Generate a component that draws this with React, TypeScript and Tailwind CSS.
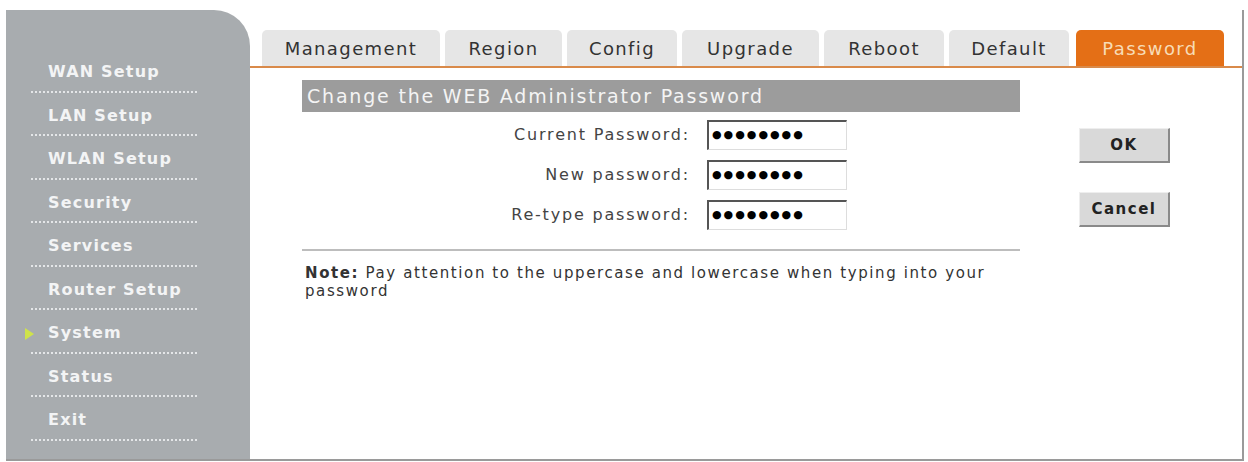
const menu = [
  "WAN Setup",
  "LAN Setup",
  "WLAN Setup",
  "Security",
  "Services",
  "Router Setup",
  "System",
  "Status",
  "Exit",
];

const tabs = [
  { label: "Management", w: "w-[178px]" },
  { label: "Region", w: "w-[117px]" },
  { label: "Config", w: "w-[110px]" },
  { label: "Upgrade", w: "w-[137px]" },
  { label: "Reboot", w: "w-[120px]" },
  { label: "Default", w: "w-[120px]" },
  { label: "Password", w: "w-[148px]", active: true },
];

const fields = ["Current Password:", "New password:", "Re-type password:"];

function Sidebar() {
  return (
    <div className="w-[244px] shrink-0 bg-[#a8acaf] rounded-tr-[36px] pt-[39px] pl-[25px] pr-[53px]">
      {menu.map((item) => (
        <div
          key={item}
          className="h-[43.5px] border-b-2 border-dotted border-[#e4e6e8] flex items-center relative"
        >
          {item === "System" && (
            <span className="absolute left-[-6px] top-[18px] w-0 h-0 border-y-[6px] border-y-transparent border-l-[9px] border-l-[#cfe34a]" />
          )}
          <span className="pl-[17px] pt-[5px] text-[16px] font-bold text-[#f3f4f5] tracking-[1.2px]">
            {item}
          </span>
        </div>
      ))}
    </div>
  );
}

function TabBar() {
  return (
    <div className="flex items-end gap-[5px] pl-[12px] mt-[20px] border-b-2 border-[#d98a4a]">
      {tabs.map((t) => (
        <div
          key={t.label}
          className={`${t.w} h-[36px] rounded-t-[5px] flex items-center justify-center text-[18px] tracking-[1.4px] ${
            t.active
              ? "bg-[#e46f16] text-[#f7dcb6] ml-[2px]"
              : "bg-[#e6e6e6] text-[#333]"
          }`}
        >
          {t.label}
        </div>
      ))}
    </div>
  );
}

function PasswordForm() {
  return (
    <div className="flex pl-[52px] pt-[12px]">
      <div className="w-[718px]">
        <div className="h-[32px] bg-[#9c9c9c] text-[#f4f4f4] text-[19px] tracking-[1.8px] pl-[5px] flex items-center whitespace-nowrap">
          Change the WEB Administrator Password
        </div>
        <div className="flex flex-col gap-[10px] pt-[8px]">
          {fields.map((f) => (
            <div key={f} className="flex items-center h-[30px]">
              <div className="w-[388px] text-right text-[16px] tracking-[1.8px] text-[#444]">
                {f}
              </div>
              <div className="ml-[17px] w-[140px] h-[30px] bg-white border-t-2 border-l-2 border-[#555] border-r border-b border-r-[#ddd] border-b-[#ddd] flex items-center pl-[3px] text-[11px] tracking-[2px] text-black">
                ●●●●●●●●
              </div>
            </div>
          ))}
        </div>
        <div className="mt-[19px] h-[2px] bg-[#bdbdbd]" />
        <p className="mt-[13px] pl-[3px] text-[15px] tracking-[1.6px] leading-[18px] text-[#333] whitespace-nowrap">
          <span className="font-bold">Note:</span> Pay attention to the
          uppercase and lowercase when typing into your
          <br />
          password
        </p>
      </div>
      <div className="ml-[59px] pt-[48px] flex flex-col gap-[29px]">
        <button className="w-[91px] h-[35px] bg-[#d9d9d9] border-t border-l border-[#eee] border-r-2 border-b-2 border-r-[#8a8a8a] border-b-[#8a8a8a] text-[15px] tracking-[1.5px] font-bold text-[#222]">
          OK
        </button>
        <button className="w-[91px] h-[35px] bg-[#d9d9d9] border-t border-l border-[#eee] border-r-2 border-b-2 border-r-[#8a8a8a] border-b-[#8a8a8a] text-[15px] tracking-[1.5px] font-bold text-[#222]">
          Cancel
        </button>
      </div>
    </div>
  );
}

export default function App() {
  return (
    <div
      className="w-[1248px] h-[462px] bg-white pt-[10px] pl-[6px] overflow-hidden"
      style={{ fontFamily: '"DejaVu Sans", Verdana, sans-serif' }}
    >
      <div className="flex h-[451px] w-[1238px] border-b-2 border-[#9a9a9a]">
        <Sidebar />
        <div className="flex-1 border-r-2 border-[#9a9a9a]">
          <TabBar />
          <PasswordForm />
        </div>
      </div>
    </div>
  );
}
